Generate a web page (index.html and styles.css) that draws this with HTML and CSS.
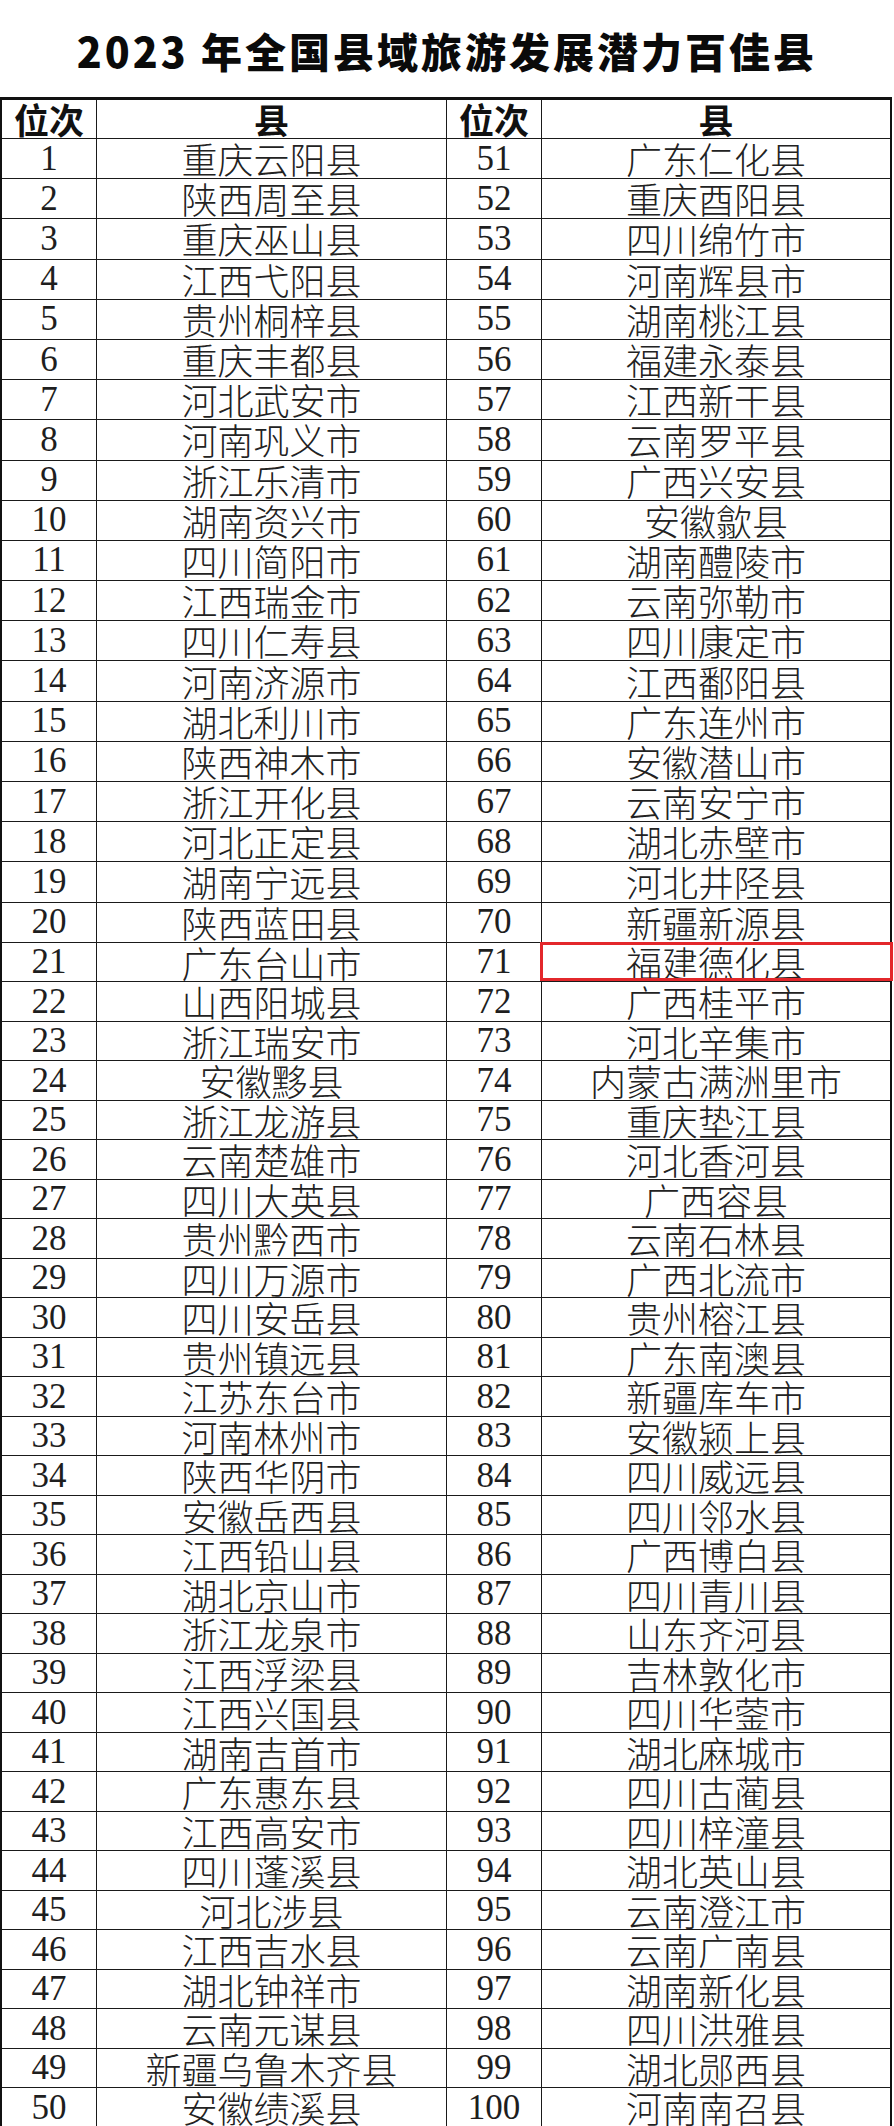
FILE: index.html
```html
<!DOCTYPE html>
<html lang="zh-CN">
<head>
<meta charset="utf-8">
<title>2023年全国县域旅游发展潜力百佳县</title>
<link rel="stylesheet" href="styles.css">
</head>
<body>
<h1 class="title">2023 年全国县域旅游发展潜力百佳县</h1>
<div class="sheet" id="sheet">
  <div class="cell head">位次</div><div class="cell head">县</div><div class="cell head">位次</div><div class="cell head last">县</div>
</div>
<script src="app.js"></script>
</body>
</html>
```
FILE: app.js
```js
const left = ["重庆云阳县","陕西周至县","重庆巫山县","江西弋阳县","贵州桐梓县","重庆丰都县","河北武安市","河南巩义市","浙江乐清市","湖南资兴市","四川简阳市","江西瑞金市","四川仁寿县","河南济源市","湖北利川市","陕西神木市","浙江开化县","河北正定县","湖南宁远县","陕西蓝田县","广东台山市","山西阳城县","浙江瑞安市","安徽黟县","浙江龙游县","云南楚雄市","四川大英县","贵州黔西市","四川万源市","四川安岳县","贵州镇远县","江苏东台市","河南林州市","陕西华阴市","安徽岳西县","江西铅山县","湖北京山市","浙江龙泉市","江西浮梁县","江西兴国县","湖南吉首市","广东惠东县","江西高安市","四川蓬溪县","河北涉县","江西吉水县","湖北钟祥市","云南元谋县","新疆乌鲁木齐县","安徽绩溪县"];
const right = ["广东仁化县","重庆酉阳县","四川绵竹市","河南辉县市","湖南桃江县","福建永泰县","江西新干县","云南罗平县","广西兴安县","安徽歙县","湖南醴陵市","云南弥勒市","四川康定市","江西鄱阳县","广东连州市","安徽潜山市","云南安宁市","湖北赤壁市","河北井陉县","新疆新源县","福建德化县","广西桂平市","河北辛集市","内蒙古满洲里市","重庆垫江县","河北香河县","广西容县","云南石林县","广西北流市","贵州榕江县","广东南澳县","新疆库车市","安徽颍上县","四川威远县","四川邻水县","广西博白县","四川青川县","山东齐河县","吉林敦化市","四川华蓥市","湖北麻城市","四川古蔺县","四川梓潼县","湖北英山县","云南澄江市","云南广南县","湖南新化县","四川洪雅县","湖北郧西县","河南南召县"];
const sheet = document.getElementById('sheet');
function cell(text, cls) {
  const d = document.createElement('div');
  d.className = 'cell ' + cls;
  d.textContent = text;
  sheet.appendChild(d);
  return d;
}
for (let i = 0; i < 50; i++) {
  cell(String(i + 1), 'num');
  cell(left[i], 'name');
  cell(String(i + 51), 'num');
  const r = cell(right[i], 'name last');
  if (i + 51 === 71) r.classList.add('marked');
}
```
FILE: styles.css
```css
html, body {
  margin: 0;
  padding: 0;
  background: #ffffff;
}
body {
  width: 894px;
  font-family: "Noto Sans CJK SC", sans-serif;
  color: #1a1a1a;
}
.title {
  margin: 0;
  height: 93px;
  padding-top: 4px;
  line-height: 93px;
  text-align: center;
  font-family: "Noto Sans CJK SC", sans-serif;
  font-weight: 900;
  font-size: 41px;
  letter-spacing: 3px;
  color: #0a0a0a;
}
.sheet {
  width: 888px;
  border: 2px solid #111;
  border-top-width: 3px;
  display: grid;
  grid-template-columns: 95px 350px 95px 348px;
  grid-template-rows: 39px repeat(20, 40.2px) repeat(30, 39.5px);
}
.cell {
  box-sizing: border-box;
  border-right: 1px solid #1a1a1a;
  border-bottom: 1px solid #1a1a1a;
  display: flex;
  align-items: center;
  justify-content: center;
  white-space: nowrap;
  line-height: 1;
  padding-bottom: 1px;
}
.cell.last {
  border-right: none;
}
.head {
  font-family: "Noto Sans CJK SC", sans-serif;
  font-weight: 700;
  font-size: 35px;
  color: #111;
}
.num {
  font-family: "Liberation Serif", serif;
  font-size: 35px;
  color: #1e1e1e;
}
.name {
  font-family: "Noto Sans CJK SC", sans-serif;
  font-weight: 300;
  font-size: 36px;
  color: #222;
}
.marked {
  position: relative;
}
.marked::after {
  content: "";
  position: absolute;
  top: -1px;
  left: -2px;
  right: -3px;
  bottom: 0;
  border: 3px solid #e3272b;
}
```
